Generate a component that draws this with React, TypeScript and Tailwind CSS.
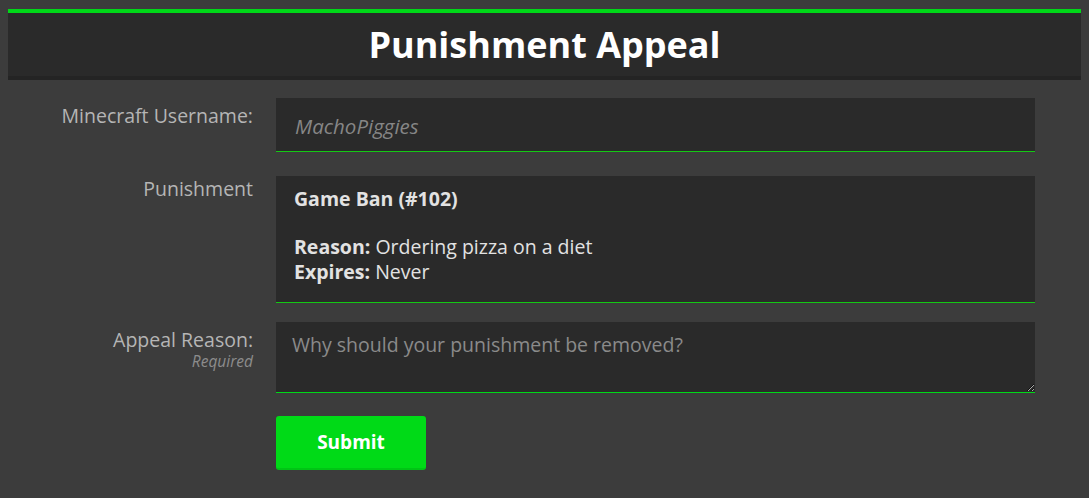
export default function App() {
  return (
    <div className="min-h-[498px] bg-[#3c3c3c] pt-[9px] font-['Open_Sans',sans-serif]">
      {/* HEADER */}
      <div className="mx-[8px] border-t-4 border-b-4 border-t-[#00d818] border-b-[#242424] bg-[#2a2a2a]">
        <h1 className="h-[63px] text-center text-[36px] font-bold leading-[63px] text-white">
          Punishment Appeal
        </h1>
      </div>

      <form className="mx-[8px] mt-[18px]" onSubmit={(e) => e.preventDefault()}>
        {/* USERNAME */}
        <div className="flex gap-[23px]">
          <label className="w-[245px] pt-[5px] text-right text-[19.5px] leading-[25px] text-[#b5b5b5]">
            Minecraft Username:
          </label>
          <input
            className="h-[54px] w-[759px] border-b border-[#14c814] bg-[#2a2a2a] px-[19px] pt-[2px] text-[20.5px] text-[#ddd] italic placeholder:text-[#868686] focus:outline-none"
            placeholder="MachoPiggies"
            readOnly
          />
        </div>

        {/* PUNISHMENT */}
        <div className="mt-[24px] flex gap-[23px]">
          <label className="w-[245px] text-right text-[19.5px] leading-[25px] text-[#b5b5b5]">
            Punishment
          </label>
          <div className="h-[127px] w-[759px] border-b border-[#14c814] bg-[#2a2a2a] px-[18px] pt-[10px] text-[19.5px] leading-[25px] text-[#e2e2e2]">
            <p className="font-bold">Game Ban (#102)</p>
            <p className="mt-[23px]">
              <span className="font-bold">Reason:</span> Ordering pizza on a diet
            </p>
            <p>
              <span className="font-bold">Expires:</span> Never
            </p>
          </div>
        </div>

        {/* APPEAL REASON */}
        <div className="mt-[19px] flex gap-[23px]">
          <div className="w-[245px] pt-[7px] text-right">
            <label className="block text-[19.5px] leading-[22px] text-[#b5b5b5]">
              Appeal Reason:
            </label>
            <span className="mt-[1px] block text-[15.5px] leading-[18px] text-[#8c8c8c] italic">
              Required
            </span>
          </div>
          <textarea
            className="block h-[71px] w-[759px] border-b border-[#00d818] bg-[#2a2a2a] px-[16px] pt-[10px] text-[19.5px] leading-[25px] text-[#ddd] placeholder:text-[#8a8a8a] focus:outline-none"
            placeholder="Why should your punishment be removed?"
          />
        </div>

        {/* SUBMIT */}
        <div className="mt-[23px] flex gap-[23px]">
          <div className="w-[245px]" />
          <button
            type="submit"
            className="h-[54px] w-[150px] rounded-[3px] border-b-2 border-[#00c515] bg-[#00da17] text-[19px] font-bold text-white"
          >
            Submit
          </button>
        </div>
      </form>
    </div>
  );
}
